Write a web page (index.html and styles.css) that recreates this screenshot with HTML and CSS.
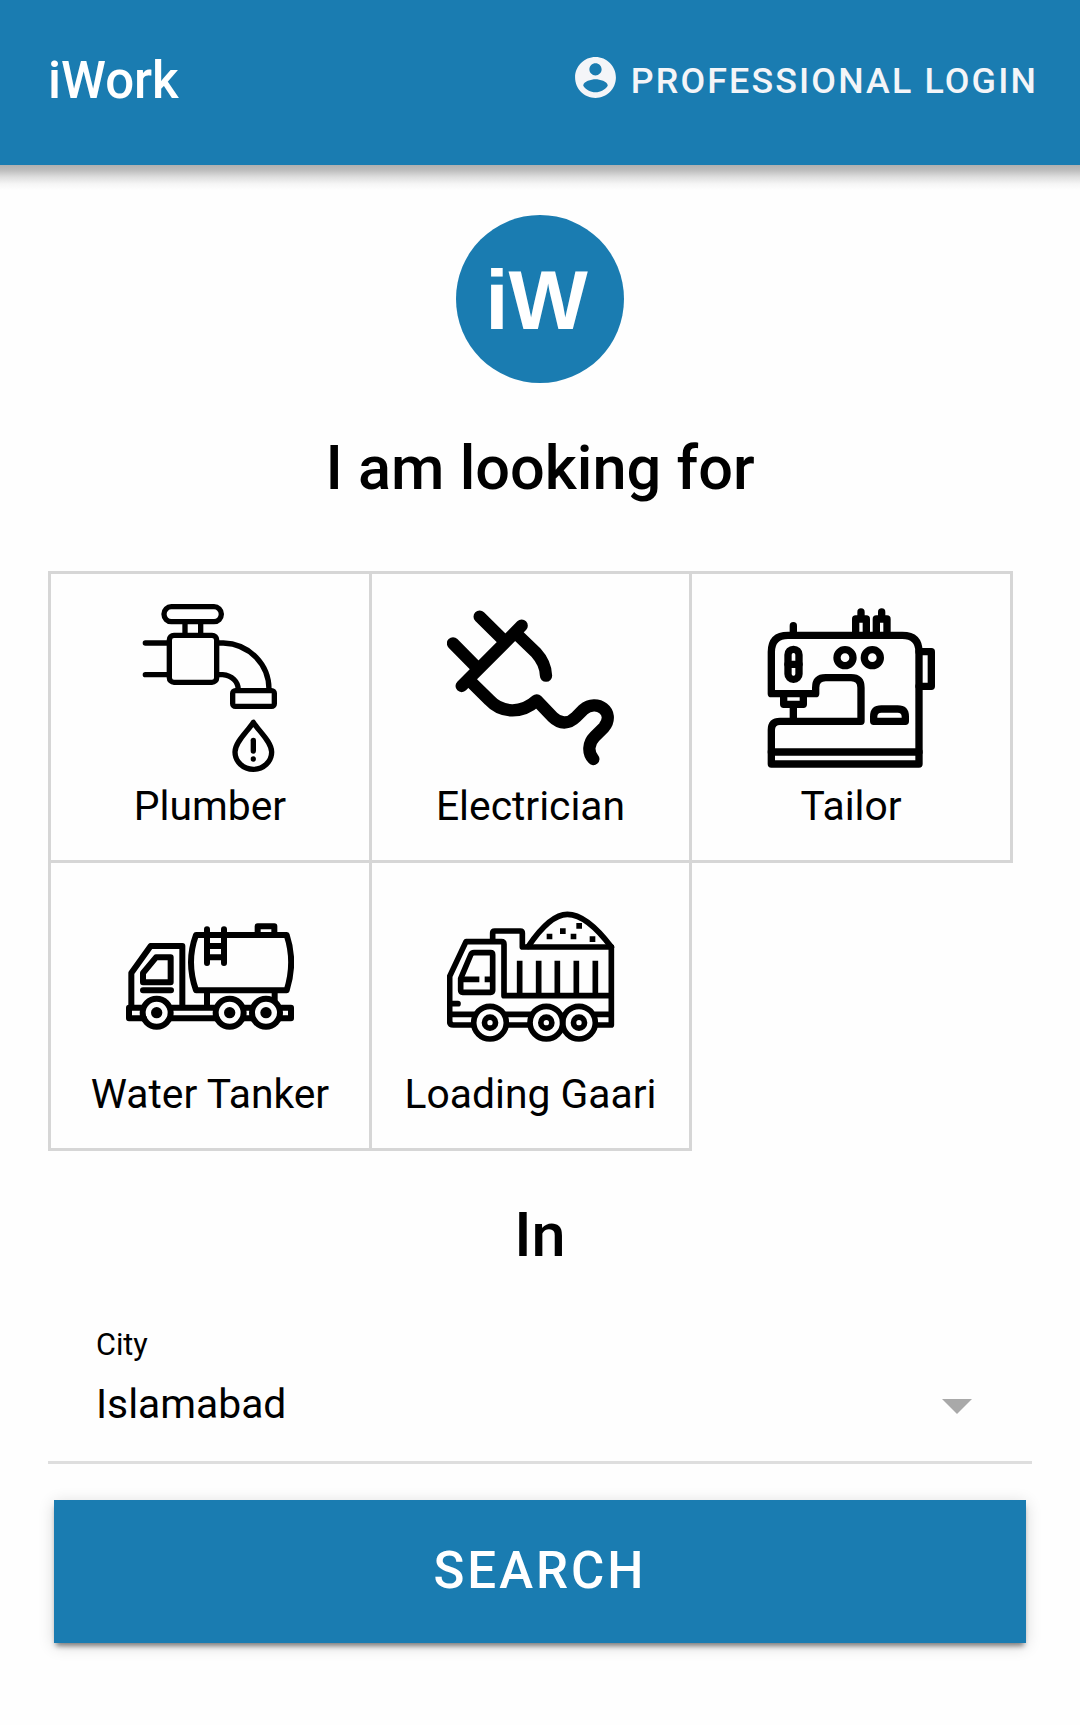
FILE: index.html
```html
<!DOCTYPE html>
<html lang="en">
<head>
    <meta charset="UTF-8">
    <meta name="viewport" content="width=device-width, initial-scale=1.0">
    <title>iWork</title>
    <link rel="stylesheet" href="styles.css">
</head>
<body>
    <header class="toolbar">
        <div class="title">iWork</div>
        <a class="login">
            <svg class="login-icon" viewBox="0 0 24 24">
                <path d="M12 2C6.48 2 2 6.48 2 12s4.48 10 10 10 10-4.48 10-10S17.52 2 12 2zm0 3c1.66 0 3 1.34 3 3s-1.34 3-3 3-3-1.34-3-3 1.34-3 3-3zm0 14.2c-2.5 0-4.71-1.28-6-3.22.03-1.99 4-3.08 6-3.08 1.99 0 5.97 1.09 6 3.08-1.29 1.94-3.5 3.22-6 3.22z"/>
            </svg>
            <span>PROFESSIONAL LOGIN</span>
        </a>
    </header>

    <main class="content">
        <div class="logo">iW</div>
        <h2>I am looking for</h2>

        <div class="services">
            <div class="service">
                <svg class="icon" viewBox="18 42 504 504" stroke-width="16">
                    <rect x="132" y="50" width="172" height="45" rx="22"/>
                    <path d="M195 100V133M242 100V133"/>
                    <rect x="148" y="136" width="142" height="141" rx="14"/>
                    <path d="M76 159H146M76 254H146"/>
                    <path d="M292 159H310C390 162 447 225 447 298M292 254H308C335 256 355 275 355 300"/>
                    <rect x="338" y="302" width="125" height="47" rx="8"/>
                    <path d="M400 397C385 422 345 455 345 486A55 52 0 0 0 455 486C455 455 415 422 400 397Z"/>
                    <path d="M400 451V483"/>
                    <circle class="solid" cx="400" cy="507" r="8"/>
                </svg>
                <span>Plumber</span>
            </div>
            <div class="service">
                <svg class="icon" viewBox="51 42 504 504" stroke-width="37">
                    <path d="M149 80L218 148M69 160L140 232M275 107L95 288"/>
                    <path d="M258 130L318 188Q347 220 348 257"/>
                    <path d="M122 275L178 330C215 370 275 372 320 331L368 381C390 403 416 403 438 381L460 359C500 325 558 365 522 412L494 440C474 460 473 488 490 507"/>
                </svg>
                <span>Electrician</span>
            </div>
            <div class="service">
                <svg class="icon" viewBox="52 42 504 504" stroke-width="22">
                    <path d="M65 311V186Q65 136 115 136H458Q508 136 508 186V522H65V420Q65 394 91 394H334V293Q334 263 304 263H228Q198 263 198 293V311H65Z"/>
                    <path d="M65 486H508"/>
                    <rect x="115" y="178" width="33" height="90" rx="16"/>
                    <path d="M115 223H148"/>
                    <circle cx="286" cy="203" r="24"/>
                    <circle cx="368" cy="203" r="24"/>
                    <path d="M102 315V343H161V315M131 350V394M131 107V130"/>
                    <path d="M318 130V87H350V130M334 66V87M380 130V87H412V130M396 66V87"/>
                    <path d="M508 185H545V289H508"/>
                    <path d="M372 394V380Q372 357 395 357H444Q467 357 467 380V394Z"/>
                </svg>
                <span>Tailor</span>
            </div>
            <div class="service second-row">
                <svg class="icon" viewBox="258 5 504 504" stroke-width="18">
                    <path d="M274 350V248L332 167H427V345"/>
                    <path d="M309 276V248L348 201H392V276ZM309 300H393"/>
                    <path d="M305 352H267V384H312M395 352H525M390 384H530M612 352H635M610 384H637M722 352H753V384H718"/>
                    <circle cx="350" cy="367" r="42"/>
                    <circle cx="569" cy="367" r="42"/>
                    <circle cx="678" cy="367" r="42"/>
                    <g class="solid">
                        <circle cx="350" cy="367" r="17"/>
                        <circle cx="569" cy="367" r="17"/>
                        <circle cx="678" cy="367" r="17"/>
                    </g>
                    <path d="M501 305V345M704 305V330"/>
                    <path d="M468 134H740Q767 215 740 300H468Q438 215 468 134Z"/>
                    <path d="M501 117V218M552 117V218M501 167H552M501 201H552"/>
                    <path d="M653 130V108H703V130"/>
                </svg>
                <span>Water Tanker</span>
            </div>
            <div class="service second-row">
                <svg class="icon" viewBox="231 5 504 504" stroke-width="17">
                    <path d="M310 404H250Q239 404 239 393V258L288 154H394Q402 154 402 162V316H724M724 170V404H678M239 372H312M408 372H482M410 404H480M676 372H724M239 340H264"/>
                    <path d="M368 152V128Q368 122 374 122H451Q457 122 457 128V170H724"/>
                    <path d="M475 168Q540 72 592 72Q650 72 724 170"/>
                    <path d="M272 265L302 194Q305 187 312 187H362Q368 187 368 193V300Q368 306 362 306H278Q272 306 272 300Z"/>
                    <path class="flat" d="M272 267H328M344 267H368M449 211V312M506 211V312M562 211V312M619 211V312M676 211V312"/>
                    <circle cx="360" cy="397" r="49"/>
                    <circle cx="529" cy="397" r="49"/>
                    <circle cx="627" cy="397" r="49"/>
                    <circle cx="360" cy="397" r="16.5"/>
                    <circle cx="529" cy="397" r="16.5"/>
                    <circle cx="627" cy="397" r="16.5"/>
                    <path class="solid" d="M530 130h17v17h-17zM570 114h17v17h-17zM602 130h17v17h-17zM619 98h17v17h-17zM659 138h17v17h-17z"/>
                </svg>
                <span>Loading Gaari</span>
            </div>
        </div>

        <h2>In</h2>

        <div class="city">
            <div>
                <div class="city-label">City</div>
                <div class="city-value">Islamabad</div>
            </div>
            <div class="arrow"></div>
        </div>

        <button class="search">SEARCH</button>
    </main>
</body>
</html>
```
FILE: styles.css
```css
* {
    box-sizing: border-box;
}
body {
    margin: 0;
    font-family: Roboto, sans-serif;
    background: #fefefe;
    color: #000;
}
.toolbar {
    position: relative;
    display: flex;
    align-items: center;
    justify-content: space-between;
    height: 165px;
    padding: 0 42px 5px 48px;
    background: #1a7cb1;
}
/* shadow under the toolbar */
.toolbar::after {
    content: "";
    position: absolute;
    left: 0;
    top: 100%;
    width: 100%;
    height: 25px;
    background: linear-gradient(#b0b0b0, #bcbcbc 20%, #dedede 48%, #f5f5f5 75%, #fefefe);
}
.title {
    color: #fff;
    font-size: 51px;
    font-weight: 500;
}
.login {
    display: flex;
    align-items: center;
    gap: 11px;
    color: #f4f5f8;
    font-size: 35.8px;
    font-weight: 500;
    letter-spacing: 2.15px;
}
.login span {
    padding-top: 1px;
}
.login-icon {
    width: 49px;
    height: 49px;
    margin-bottom: 5px;
    fill: #f4f5f8;
}
.content {
    padding: 50px 48px 82px;
}
.logo {
    width: 168px;
    height: 168px;
    margin: 0 auto;
    padding-right: 7px;
    border-radius: 50%;
    background: #1a7cb1;
    color: #fff;
    font-family: "Liberation Sans", Arial, sans-serif;
    font-size: 84px;
    font-weight: bold;
    line-height: 171px;
    text-align: center;
}
h2 {
    margin: 50px 0 0;
    font-size: 61.3px;
    font-weight: 500;
    line-height: 70px;
    text-align: center;
}
.services {
    display: grid;
    grid-template-columns: 321px 320px 321px;
    grid-template-rows: 289px 288px;
    margin-top: 68px;
    padding: 0 0 2px;
}
.service {
    display: flex;
    flex-direction: column;
    align-items: center;
    margin: 0 -3px -3px 0;
    padding-top: 30px;
    border: 3px solid #d6d6d6;
    font-size: 40.8px;
    line-height: 48px;
    white-space: nowrap;
}
.second-row {
    padding-top: 29px;
}
.icon {
    width: 168px;
    height: 168px;
    margin-bottom: 10px;
    fill: none;
    stroke: #000;
    stroke-linecap: round;
    stroke-linejoin: round;
}
.icon .solid {
    fill: #000;
    stroke: none;
}
.icon .flat {
    stroke-linecap: butt;
}
.city {
    display: flex;
    align-items: flex-end;
    justify-content: space-between;
    height: 194px;
    padding: 0 60px 33px 48px;
    border-bottom: 3px solid #dedede;
}
.city-label {
    margin-bottom: 17px;
    font-size: 30.6px;
    line-height: 36px;
}
.city-value {
    font-size: 40.8px;
    line-height: 48px;
}
.arrow {
    margin-bottom: 14px;
    border: 15px solid transparent;
    border-top-color: #a9a9a9;
    border-bottom: 0;
}
.search {
    display: block;
    width: 972px;
    height: 143px;
    margin: 36px auto 0;
    padding: 0 0 2px;
    border: none;
    background: #1a7cb1;
    box-shadow: 0 5px 5px -2px rgba(0,0,0,0.45), 0 3px 15px rgba(0,0,0,0.16);
    color: #fff;
    font-family: inherit;
    font-size: 51px;
    font-weight: 500;
    letter-spacing: 3px;
}
```
